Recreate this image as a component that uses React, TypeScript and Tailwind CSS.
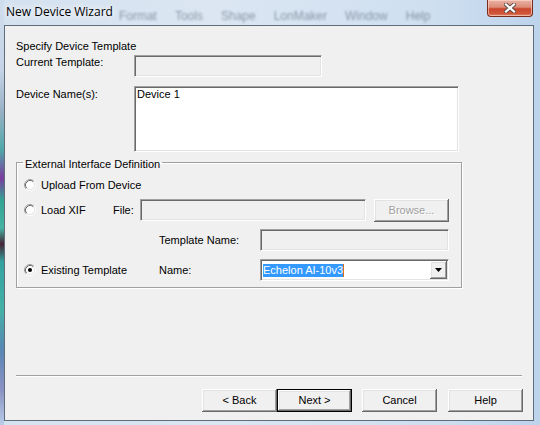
import React from "react";

const raised =
  "shadow-[inset_-1px_-1px_0_#696969,inset_1px_1px_0_#ffffff,inset_-2px_-2px_0_#a0a0a0,inset_2px_2px_0_#e3e3e3]";
const sunken =
  "border border-t-[#a0a0a0] border-l-[#a0a0a0] border-b-white border-r-white shadow-[inset_1px_1px_0_#696969,inset_-1px_-1px_0_#e3e3e3]";

function Radio({ checked }: { checked?: boolean }) {
  return (
    <svg width="12" height="12" viewBox="0 0 12 12" className="shrink-0">
      <circle cx="6" cy="6" r="4.2" fill="#ffffff" />
      <path d="M2.11 9.89 A5.5 5.5 0 0 1 9.89 2.11" fill="none" stroke="#a0a0a0" strokeWidth="1" />
      <path d="M9.89 2.11 A5.5 5.5 0 0 1 2.11 9.89" fill="none" stroke="#ffffff" strokeWidth="1" />
      <path d="M2.82 9.18 A4.5 4.5 0 0 1 9.18 2.82" fill="none" stroke="#696969" strokeWidth="1" />
      <path d="M9.18 2.82 A4.5 4.5 0 0 1 2.82 9.18" fill="none" stroke="#e3e3e3" strokeWidth="1" />
      {checked && <circle cx="6" cy="6" r="2" fill="#000000" />}
    </svg>
  );
}

function Button({ label, isDefault }: { label: string; isDefault?: boolean }) {
  return (
    <div
      className={`w-[75px] h-[23px] bg-[#f0f0f0] flex items-center justify-center text-black ${
        isDefault ? "border border-black" : ""
      } ${raised}`}
    >
      {label}
    </div>
  );
}

export default function App() {
  return (
    <div className="w-[540px] h-[425px] flex overflow-hidden font-['Liberation_Sans',Arial,sans-serif] text-[11px] leading-[13px] text-black bg-[linear-gradient(90deg,#d4e1ef,#dbe6f2_40%,#cfdff0_80%,#bdd3ec)]">
      {/* left frame strip showing desktop */}
      <div className="w-[4px] h-[425px] shrink-0 bg-[linear-gradient(180deg,#d0dded_0px,#c4d4e6_70px,#9bb2c6_110px,#4fa8a8_150px,#7a3c9e_178px,#33a493_200px,#46b3a3_228px,#452536_244px,#34a3a0_262px,#44b1a6_310px,#5a86b4_350px,#8a92c4_390px,#b8cde8_425px)]" />
      <div className="w-[536px] h-[425px] flex flex-col">
        {/* title bar */}
        <div className="h-[25px] flex items-start justify-between pr-[7px]">
          <div className="flex items-start">
            <div className="pl-[2px] pt-[4px] text-[12px] leading-[16px] font-['Segoe_UI','Open_Sans',sans-serif] text-black [text-shadow:0_0_6px_#ffffff,0_0_10px_#ffffff]">
              New Device Wizard
            </div>
            <div className="ml-[6px] pt-[9px] flex gap-[18px] text-[12px] leading-[14px] text-[#3e4c5c] blur-[1.2px] opacity-50">
              <span>Format</span>
              <span>Tools</span>
              <span>Shape</span>
              <span>LonMaker</span>
              <span>Window</span>
              <span>Help</span>
            </div>
          </div>
          <div className="w-[46px] h-[17px] rounded-b-[4px] border border-t-0 border-[#7a2a1c] bg-[linear-gradient(180deg,#ebb3a5_0%,#dc8b76_45%,#c9472c_55%,#d0573a_85%,#e08a6c_100%)] shadow-[inset_0_0_0_1px_rgba(255,220,210,0.6)] flex items-center justify-center">
            <svg width="12" height="10" viewBox="0 0 12 10">
              <path d="M2 1.5 L10 8.5 M10 1.5 L2 8.5" stroke="#5a4a48" strokeWidth="4" strokeLinecap="square" />
              <path d="M2 1.5 L10 8.5 M10 1.5 L2 8.5" stroke="#ffffff" strokeWidth="2.2" strokeLinecap="square" />
            </svg>
          </div>
        </div>

        {/* client area */}
        <div className="w-[530px] h-[396px] border border-[#5f6d7b] bg-[#f0f0f0] flex flex-col pl-[11px] pt-[14px]">
          <div>Specify Device Template</div>

          <div className="mt-[2px] flex items-start">
            <div className="w-[118px] pt-[1px]">Current Template:</div>
            <div className={`w-[188px] h-[22px] bg-[#f0f0f0] ${sunken}`} />
          </div>

          <div className="mt-[9px] flex items-start">
            <div className="w-[118px] pt-[2px]">Device Name(s):</div>
            <div className={`w-[325px] h-[66px] bg-white pl-[2px] pt-[1px] ${sunken}`}>Device 1</div>
          </div>

          <fieldset className="mt-[2px] w-[446px] border border-[#a0a0a0] pb-[6px] shadow-[inset_1px_1px_0_#ffffff,1px_1px_0_#ffffff]">
            <legend className="ml-[6px] px-[2px] pt-[4px] leading-[13px]">External Interface Definition</legend>

            <div className="mt-[6px] h-[16px] pl-[7px] flex items-center">
              <Radio />
              <span className="ml-[5px]">Upload From Device</span>
            </div>

            <div className="mt-[6px] h-[22px] pl-[7px] flex items-center">
              <div className="w-[89px] flex items-center">
                <Radio />
                <span className="ml-[5px]">Load XIF</span>
              </div>
              <div className="w-[27px]">File:</div>
              <div className={`w-[226px] h-[22px] bg-[#f0f0f0] ${sunken}`} />
              <div className={`ml-[8px] w-[75px] h-[23px] bg-[#f0f0f0] flex items-center justify-center text-[#a0a0a0] [text-shadow:1px_1px_0_#ffffff] ${raised}`}>
                Browse...
              </div>
            </div>

            <div className="mt-[8px] h-[22px] pl-[142px] flex items-center">
              <div className="w-[101px]">Template Name:</div>
              <div className={`w-[189px] h-[22px] bg-[#f0f0f0] ${sunken}`} />
            </div>

            <div className="mt-[8px] h-[22px] pl-[7px] flex items-center">
              <div className="w-[135px] flex items-center">
                <Radio checked />
                <span className="ml-[5px]">Existing Template</span>
              </div>
              <div className="w-[101px]">Name:</div>
              <div className={`w-[189px] h-[22px] bg-white flex items-center justify-between ${sunken}`}>
                <span className="ml-[2px] bg-[#3399ff] text-white leading-[13px] border-r border-[#d8701c]">
                  Echelon AI-10v3
                </span>
                <div className={`w-[17px] h-[18px] mr-[1px] bg-[#f0f0f0] flex items-center justify-center ${raised}`}>
                  <svg width="7" height="4" viewBox="0 0 7 4">
                    <path d="M0 0 H7 L3.5 4 Z" fill="#000000" />
                  </svg>
                </div>
              </div>
            </div>
          </fieldset>

          <div className="mt-[87px] w-[506px] h-[2px] border-t border-[#a0a0a0] border-b border-b-white" />

          <div className="mt-[12px] pr-[10px] flex justify-end">
            <Button label="< Back" />
            <Button label="Next >" isDefault />
            <div className="ml-[10px]">
              <Button label="Cancel" />
            </div>
            <div className="ml-[11px]">
              <Button label="Help" />
            </div>
          </div>
        </div>
        <div className="h-[4px]" />
      </div>
    </div>
  );
}
